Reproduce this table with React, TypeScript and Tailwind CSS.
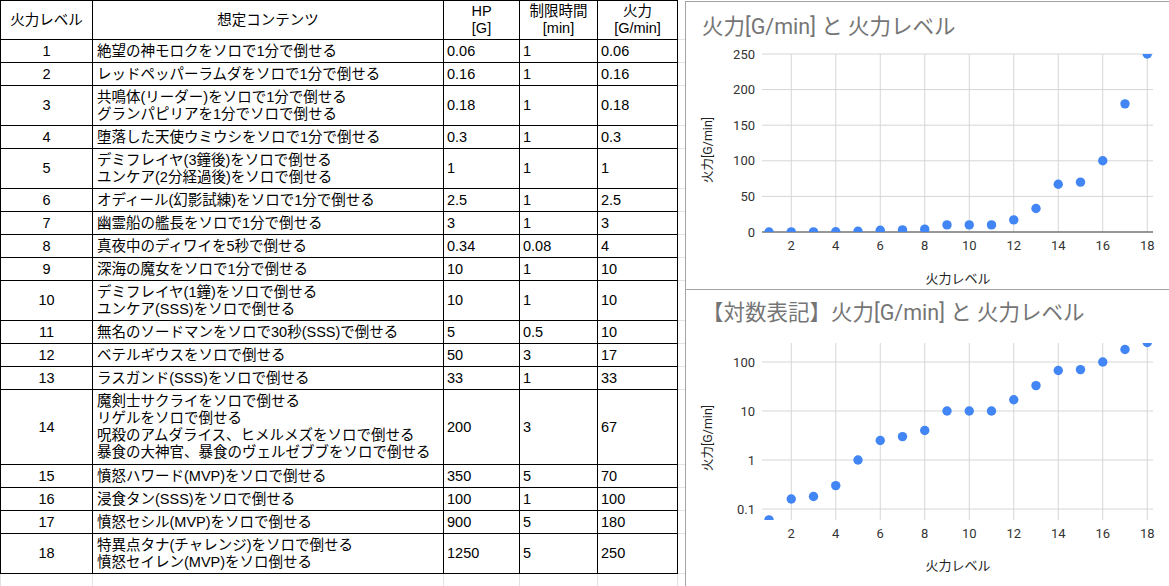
import React from "react";

type Row = { lv: number; lines: string[]; hp: string; time: string; fire: string; v: number };

const rows: Row[] = [
  { lv: 1, lines: ["絶望の神モロクをソロで1分で倒せる"], hp: "0.06", time: "1", fire: "0.06", v: 0.06 },
  { lv: 2, lines: ["レッドペッパーラムダをソロで1分で倒せる"], hp: "0.16", time: "1", fire: "0.16", v: 0.16 },
  { lv: 3, lines: ["共鳴体(リーダー)をソロで1分で倒せる", "グランパピリアを1分でソロで倒せる"], hp: "0.18", time: "1", fire: "0.18", v: 0.18 },
  { lv: 4, lines: ["堕落した天使ウミウシをソロで1分で倒せる"], hp: "0.3", time: "1", fire: "0.3", v: 0.3 },
  { lv: 5, lines: ["デミフレイヤ(3鐘後)をソロで倒せる", "ユンケア(2分経過後)をソロで倒せる"], hp: "1", time: "1", fire: "1", v: 1 },
  { lv: 6, lines: ["オディール(幻影試練)をソロで1分で倒せる"], hp: "2.5", time: "1", fire: "2.5", v: 2.5 },
  { lv: 7, lines: ["幽霊船の艦長をソロで1分で倒せる"], hp: "3", time: "1", fire: "3", v: 3 },
  { lv: 8, lines: ["真夜中のディワイを5秒で倒せる"], hp: "0.34", time: "0.08", fire: "4", v: 4 },
  { lv: 9, lines: ["深海の魔女をソロで1分で倒せる"], hp: "10", time: "1", fire: "10", v: 10 },
  { lv: 10, lines: ["デミフレイヤ(1鐘)をソロで倒せる", "ユンケア(SSS)をソロで倒せる"], hp: "10", time: "1", fire: "10", v: 10 },
  { lv: 11, lines: ["無名のソードマンをソロで30秒(SSS)で倒せる"], hp: "5", time: "0.5", fire: "10", v: 10 },
  { lv: 12, lines: ["ベテルギウスをソロで倒せる"], hp: "50", time: "3", fire: "17", v: 17 },
  { lv: 13, lines: ["ラスガンド(SSS)をソロで倒せる"], hp: "33", time: "1", fire: "33", v: 33 },
  {
    lv: 14,
    lines: [
      "魔剣士サクライをソロで倒せる",
      "リゲルをソロで倒せる",
      "呪殺のアムダライス、ヒメルメズをソロで倒せる",
      "暴食の大神官、暴食のヴェルゼブブをソロで倒せる",
    ],
    hp: "200",
    time: "3",
    fire: "67",
    v: 67,
  },
  { lv: 15, lines: ["憤怒ハワード(MVP)をソロで倒せる"], hp: "350", time: "5", fire: "70", v: 70 },
  { lv: 16, lines: ["浸食タン(SSS)をソロで倒せる"], hp: "100", time: "1", fire: "100", v: 100 },
  { lv: 17, lines: ["憤怒セシル(MVP)をソロで倒せる"], hp: "900", time: "5", fire: "180", v: 180 },
  { lv: 18, lines: ["特異点タナ(チャレンジ)をソロで倒せる", "憤怒セイレン(MVP)をソロ倒せる"], hp: "1250", time: "5", fire: "250", v: 250 },
];

const rowHeight: Record<number, string> = { 1: "h-[23px]", 2: "h-[40px]", 4: "h-[75px]" };

const cell = "flex items-center border-r border-b border-black px-[3px]";

function DataTable() {
  return (
    <div className="w-[685px] shrink-0 font-[family-name:'Liberation_Sans','Noto_Sans_CJK_JP',sans-serif] text-[14.5px] leading-[17px] text-black">
      <div className="grid h-[40px] grid-cols-[93px_351px_76px_78px_80px_7px]">
        <div className={`${cell} justify-center border-l border-t`}>火力レベル</div>
        <div className={`${cell} justify-center border-t`}>想定コンテンツ</div>
        <div className={`${cell} flex-col justify-center border-t text-center`}>
          <span>HP</span>
          <span>[G]</span>
        </div>
        <div className={`${cell} flex-col justify-center border-t text-center`}>
          <span>制限時間</span>
          <span>[min]</span>
        </div>
        <div className={`${cell} flex-col justify-center border-t text-center`}>
          <span>火力</span>
          <span>[G/min]</span>
        </div>
        <div className="border-b border-[#e2e2e2]" />
      </div>
      {rows.map((r) => (
        <div key={r.lv} className={`grid grid-cols-[93px_351px_76px_78px_80px_7px] ${rowHeight[r.lines.length]}`}>
          <div className={`${cell} justify-center border-l`}>{r.lv}</div>
          <div className={`${cell} flex-col !items-start justify-center whitespace-nowrap pl-1`}>
            {r.lines.map((l) => (
              <span key={l}>{l}</span>
            ))}
          </div>
          <div className={cell}>{r.hp}</div>
          <div className={cell}>{r.time}</div>
          <div className={cell}>{r.fire}</div>
          <div className="border-b border-[#e2e2e2]" />
        </div>
      ))}
      <div className="grid h-[12px] grid-cols-[93px_351px_76px_78px_80px_7px]">
        <div className="border-r border-l border-[#e2e2e2]" />
        <div className="border-r border-[#e2e2e2]" />
        <div className="border-r border-[#e2e2e2]" />
        <div className="border-r border-[#e2e2e2]" />
        <div className="border-r border-[#e2e2e2]" />
        <div />
      </div>
    </div>
  );
}

const xTicks = [2, 4, 6, 8, 10, 12, 14, 16, 18];
const xOf = (v: number) => 83 + (v - 1) * 22.25;
const PL = 76;
const PR = 467;

type ChartProps = {
  id: string;
  height: number;
  top: number;
  bottom: number;
  yTicks: { label: string; y: number }[];
  yOf: (v: number) => number;
  baseline?: number;
  xLabelY: number;
  xTitleY: number;
};

function ScatterChart({ id, height, top, bottom, yTicks, yOf, baseline, xLabelY, xTitleY }: ChartProps) {
  return (
    <svg width={483} height={height} className="block">
      <defs>
        <clipPath id={id}>
          <rect x={PL} y={top} width={PR - PL} height={bottom - top} />
        </clipPath>
      </defs>
      {xTicks.map((t) => (
        <line key={t} x1={xOf(t)} x2={xOf(t)} y1={top} y2={bottom} stroke="#d6d6d6" strokeWidth={1} />
      ))}
      {yTicks.map((t) => (
        <g key={t.label}>
          <line x1={PL} x2={PR} y1={t.y} y2={t.y} stroke="#d6d6d6" strokeWidth={1} />
          <text x={69} y={t.y} textAnchor="end" dominantBaseline="central" fontSize={13} fill="#333">
            {t.label}
          </text>
        </g>
      ))}
      {baseline !== undefined ? (
        <line x1={PL} x2={PR} y1={baseline} y2={baseline} stroke="#444" strokeWidth={1.2} />
      ) : null}
      <g clipPath={`url(#${id})`}>
        {rows.map((r) => (
          <circle key={r.lv} cx={xOf(r.lv)} cy={yOf(r.v)} r={4.7} fill="#4285f4" />
        ))}
      </g>
      {xTicks.map((t) => (
        <text key={t} x={xOf(t)} y={xLabelY} textAnchor="middle" dominantBaseline="central" fontSize={13} fill="#333">
          {t}
        </text>
      ))}
      <text x={272} y={xTitleY} textAnchor="middle" dominantBaseline="central" fontSize={13} fill="#222">
        火力レベル
      </text>
      <text
        x={21}
        y={104}
        transform="rotate(-90 21 104)"
        textAnchor="middle"
        dominantBaseline="central"
        fontSize={12.5}
        fill="#222"
      >
        火力[G/min]
      </text>
    </svg>
  );
}

export default function App() {
  const linY = (v: number) => 186 - (v / 250) * 178;
  const logY = (v: number) => 175 - (Math.log10(v) + 1) * 49;
  return (
    <div className="flex h-[586px] w-[1169px] overflow-hidden bg-white">
      <DataTable />
      <div className="flex w-[484px] flex-col overflow-hidden pt-px font-[family-name:Roboto,'Noto_Sans_CJK_JP',sans-serif]">
        <div className="flex h-[289px] flex-col border-t border-b border-l border-[#a3a3a3]">
          <div className="flex h-[44px] items-center whitespace-nowrap pt-[7px] pl-4 text-[21.5px] text-[#757575]">
            火力[G/min] と 火力レベル
          </div>
          <ScatterChart
            id="lin"
            height={242}
            top={8}
            bottom={186}
            yTicks={[0, 50, 100, 150, 200, 250].map((v) => ({ label: String(v), y: linY(v) }))}
            yOf={linY}
            baseline={186}
            xLabelY={199}
            xTitleY={232}
          />
        </div>
        <div className="flex flex-1 flex-col border-l border-[#a3a3a3]">
          <div className="flex h-[44px] items-center whitespace-nowrap pt-[3px] pl-4 text-[21.5px] text-[#757575]">
            【対数表記】火力[G/min] と 火力レベル
          </div>
          <ScatterChart
            id="log"
            height={252}
            top={9}
            bottom={186}
            yTicks={[
              { label: "100", y: logY(100) },
              { label: "10", y: logY(10) },
              { label: "1", y: logY(1) },
              { label: "0.1", y: logY(0.1) },
            ]}
            yOf={logY}
            xLabelY={199}
            xTitleY={231}
          />
        </div>
      </div>
    </div>
  );
}
